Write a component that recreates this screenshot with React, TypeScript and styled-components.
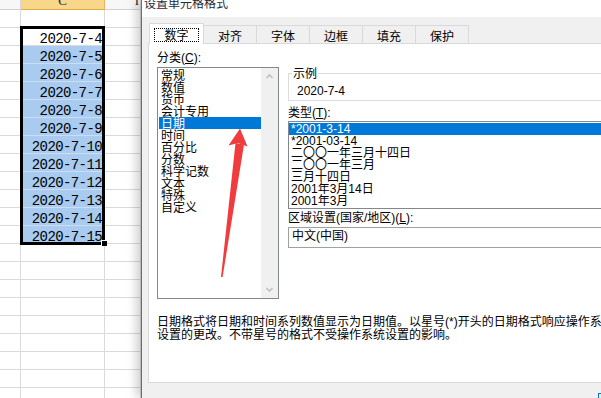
import React from 'react';
import styled, { createGlobalStyle } from 'styled-components';

const GlobalStyle = createGlobalStyle`
  html, body { margin: 0; padding: 0; background: #fff; }
  body { width: 601px; height: 398px; overflow: hidden; }
  * { box-sizing: border-box; }
`;

const UI = `"Liberation Sans", "Noto Sans CJK SC", sans-serif`;
const CJK = `"Noto Sans CJK SC", "Liberation Sans", sans-serif`;

const Page = styled.div`
  position: relative;
  display: flex;
  width: 601px;
  height: 398px;
  overflow: hidden;
  font-family: ${UI};
  font-size: 12px;
  color: #000;
`;

/* ---- spreadsheet behind the dialog ---- */

const Sheet = styled.div`
  position: relative;
  flex: none;
  width: 141px;
  display: grid;
  grid-template-columns: 21px 84px 36px;
  grid-template-rows: 10px;
  grid-auto-rows: 18px;
  align-content: start;
  background: #fff;
`;

const HeaderCell = styled.div<{ $active?: boolean; $right?: boolean }>`
  overflow: hidden;
  border-right: 1px solid ${(p) => (p.$active ? '#e3b65c' : '#d8d8d8')};
  border-bottom: 1px solid ${(p) => (p.$active ? '#e2a940' : '#d0d0d0')};
  background: ${(p) => (p.$active ? '#f8d68a' : '#f7f7f7')};
  text-align: ${(p) => (p.$right ? 'right' : 'center')};
  padding-right: ${(p) => (p.$right ? '1px' : '0')};
  font-family: "Liberation Serif", serif;
  font-size: 13px;
  line-height: 12px;
  color: #222;

  & > span {
    display: block;
    margin-top: -5px;
  }
`;

const Cell = styled.div<{ $sel?: boolean }>`
  border-right: 1px solid #dadada;
  border-bottom: 1px solid ${(p) => (p.$sel ? '#cddef2' : '#dadada')};
  background: ${(p) => (p.$sel ? '#a9cbef' : '#fff')};
  padding: 5px 2px 0 0;
  text-align: right;
  font-family: "Liberation Mono", monospace;
  font-size: 14px;
  letter-spacing: -0.6px;
  line-height: 12px;
  white-space: nowrap;
`;

const Selection = styled.div`
  position: absolute;
  left: 20px;
  top: 26px;
  width: 85px;
  height: 219px;
  border: 3px solid #000;
`;

const FillHandle = styled.div`
  position: absolute;
  left: 102px;
  top: 241px;
  width: 5px;
  height: 5px;
  background: #000;
  box-shadow: -1px -1px 0 0 #fff;
`;

/* ---- format cells dialog ---- */

const Dialog = styled.div`
  position: relative;
  z-index: 1;
  flex: 1;
  min-width: 0;
  display: flex;
  flex-direction: column;
  overflow: hidden;
  background: #f0f0f0;
  border-left: 1px solid #6e6e6e;
  box-shadow: -5px 0 9px rgba(0, 0, 0, 0.18);
`;

const TitleBar = styled.div`
  flex: none;
  height: 17px;
  overflow: hidden;
  background: #fff;
  padding-left: 2px;
`;

const Title = styled.div`
  margin-top: -5px;
  font-family: ${CJK};
  font-size: 12px;
  line-height: 16px;
  color: #1f2a38;
  white-space: nowrap;
`;

const TabStrip = styled.div`
  flex: none;
  height: 26px;
  display: flex;
  align-items: flex-end;
  padding-left: 8px;
`;

const Tab = styled.div<{ $on?: boolean }>`
  position: relative;
  z-index: ${(p) => (p.$on ? 2 : 1)};
  flex: none;
  width: ${(p) => (p.$on ? '55px' : '54px')};
  height: ${(p) => (p.$on ? '21px' : '18px')};
  margin-left: -1px;
  margin-bottom: ${(p) => (p.$on ? '-1px' : '0')};
  display: flex;
  justify-content: center;
  align-items: flex-start;
  padding: ${(p) => (p.$on ? '4px 4px 1px 4px' : '3px 0 0 0')};
  background: ${(p) => (p.$on ? '#fff' : '#f0f0f0')};
  border: 1px solid #d9d9d9;
  border-bottom: none;
  font-family: ${CJK};
  line-height: 14px;
  white-space: nowrap;
`;

const FocusRect = styled.div`
  flex: 1;
  display: flex;
  justify-content: center;
  border: 1px dotted #000;
  line-height: 12px;
`;

const Panel = styled.div`
  flex: none;
  width: 470px;
  height: 340px;
  margin-left: 6px;
  padding: 7px 0 0 8px;
  background: #fff;
  border: 1px solid #d9d9d9;
`;

const Columns = styled.div`
  display: flex;
  align-items: flex-start;
  gap: 9px;
`;

const LeftCol = styled.div`
  flex: none;
  width: 122px;
  display: flex;
  flex-direction: column;
`;

const RightCol = styled.div`
  flex: 1;
  min-width: 0;
  display: flex;
  flex-direction: column;
`;

const Label = styled.div<{ $mt?: number }>`
  height: 14px;
  margin-top: ${(p) => p.$mt ?? 0}px;
  line-height: 14px;
  white-space: nowrap;
`;

const Key = styled.u`
  text-underline-offset: 1px;
`;

const CategoryBox = styled.div`
  height: 232px;
  margin-top: 2px;
  display: flex;
  border: 1px solid #828790;
  background: #fff;
`;

const Items = styled.div`
  flex: 1;
  padding: 1px 0 0 1px;
  font-family: ${CJK};
`;

const Item = styled.div<{ $on?: boolean }>`
  height: 12px;
  line-height: 12px;
  padding-left: 2px;
  white-space: nowrap;
  background: ${(p) => (p.$on ? '#0078d7' : 'transparent')};
  color: ${(p) => (p.$on ? '#fff' : '#000')};
`;

const ScrollBar = styled.div`
  flex: none;
  width: 17px;
  display: flex;
  flex-direction: column;
  justify-content: space-between;
  background: #f0f0f0;
`;

const ScrollButton = styled.div`
  height: 17px;
  display: flex;
  align-items: center;
  justify-content: center;
`;

const Group = styled.fieldset`
  height: 35px;
  margin: 15px 0 0 0;
  padding: 4px 0 0 8px;
  border: 1px solid #dcdcdc;
  min-width: 0;
`;

const Legend = styled.legend`
  margin-left: -5px;
  padding: 0 1px;
  font-family: ${CJK};
  line-height: 14px;
`;

const Sample = styled.div`
  line-height: 14px;
`;

const TypeBox = styled.div`
  height: 88px;
  margin-top: 1px;
  padding-top: 1px;
  border: 1px solid #828790;
  background: #fff;
`;

const Combo = styled.div`
  height: 21px;
  margin-top: 2px;
  padding: 1px 3px;
  border: 1px solid #a0a0a0;
  line-height: 14px;
  background: #fff;
`;

const Description = styled.div`
  margin-top: 17px;
  line-height: 13px;
  white-space: nowrap;
`;

const Footer = styled.div`
  flex: 1;
  padding: 10px 0 0 456px;
`;

const OkButton = styled.div`
  width: 75px;
  height: 23px;
  border: 1px solid #0078d7;
  background: #e5f1fb;
`;

const Pointer = styled.svg`
  position: absolute;
  left: 0;
  top: 0;
  z-index: 5;
  pointer-events: none;
`;

const categories = ['常规', '数值', '货币', '会计专用', '日期', '时间', '百分比', '分数', '科学记数', '文本', '特殊', '自定义'];
const types = ['*2001-3-14', '*2001-03-14', '二〇〇一年三月十四日', '二〇〇一年三月', '三月十四日', '2001年3月14日', '2001年3月'];
const tabs = ['数字', '对齐', '字体', '边框', '填充', '保护'];

const Chevron = ({ down }: { down?: boolean }) => (
  <svg width="9" height="9" viewBox="0 0 9 9">
    <path
      d={down ? 'M1.5 3 L4.5 6 L7.5 3' : 'M1.5 6 L4.5 3 L7.5 6'}
      fill="none"
      stroke="#c0c0c0"
      strokeWidth="1.6"
    />
  </svg>
);

const App = (): React.ReactElement => {
  const rows = Array.from({ length: 22 }, (_, i) => i + 1);
  return (
    <Page>
      <GlobalStyle />
      <Sheet>
        <HeaderCell />
        <HeaderCell $active>
          <span>C</span>
        </HeaderCell>
        <HeaderCell $right>
          <span>I</span>
        </HeaderCell>
        {rows.map((r) => {
          const hasDate = r >= 2 && r <= 13;
          return (
            <React.Fragment key={r}>
              <Cell />
              <Cell $sel={hasDate && r > 2}>{hasDate ? `2020-7-${r + 2}` : ''}</Cell>
              <Cell />
            </React.Fragment>
          );
        })}
        <Selection />
        <FillHandle />
      </Sheet>

      <Dialog>
        <TitleBar>
          <Title>设置单元格格式</Title>
        </TitleBar>
        <TabStrip>
          {tabs.map((t, i) =>
            i === 0 ? (
              <Tab key={t} $on>
                <FocusRect>{t}</FocusRect>
              </Tab>
            ) : (
              <Tab key={t}>{t}</Tab>
            )
          )}
        </TabStrip>

        <Panel>
          <Columns>
            <LeftCol>
              <Label>
                分类(<Key>C</Key>):
              </Label>
              <CategoryBox>
                <Items>
                  {categories.map((c, i) => (
                    <Item key={c} $on={i === 4}>
                      {c}
                    </Item>
                  ))}
                </Items>
                <ScrollBar>
                  <ScrollButton>
                    <Chevron />
                  </ScrollButton>
                  <ScrollButton>
                    <Chevron down />
                  </ScrollButton>
                </ScrollBar>
              </CategoryBox>
            </LeftCol>

            <RightCol>
              <Group>
                <Legend>示例</Legend>
                <Sample>2020-7-4</Sample>
              </Group>
              <Label $mt={5}>
                类型(<Key>T</Key>):
              </Label>
              <TypeBox>
                {types.map((t, i) => (
                  <Item key={t} $on={i === 0}>
                    {t}
                  </Item>
                ))}
              </TypeBox>
              <Label $mt={2}>
                区域设置(国家/地区)(<Key>L</Key>):
              </Label>
              <Combo>中文(中国)</Combo>
            </RightCol>
          </Columns>

          <Description>
            <div>日期格式将日期和时间系列数值显示为日期值。以星号(*)开头的日期格式响应操作系统特定的区域日期和时间</div>
            <div>设置的更改。不带星号的格式不受操作系统设置的影响。</div>
          </Description>
        </Panel>

        <Footer>
          <OkButton />
        </Footer>
      </Dialog>

      <Pointer width="601" height="398" viewBox="0 0 601 398">
        <polygon points="235.5,143 244,144.5 222.6,277 221,277" fill="#f03c3c" />
        <polygon points="240,128.5 228.5,145.5 238,143 247.5,146.5" fill="#f03c3c" />
      </Pointer>
    </Page>
  );
};

export default App;
